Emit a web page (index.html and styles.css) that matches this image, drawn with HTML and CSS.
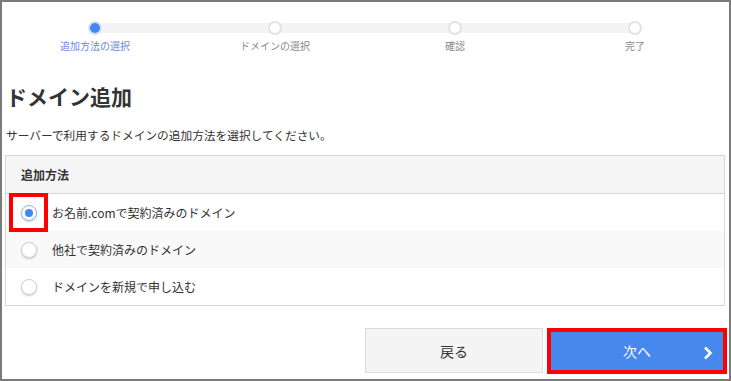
FILE: index.html
```html
<!DOCTYPE html>
<html lang="ja">
<head>
  <meta charset="UTF-8">
  <title>ドメイン追加</title>
  <link rel="stylesheet" href="styles.css">
</head>
<body>
  <div class="frame">
    <div class="steps">
      <div class="step active">
        <span class="dot"></span>
        <span class="step-label">追加方法の選択</span>
      </div>
      <div class="step">
        <span class="dot"></span>
        <span class="step-label">ドメインの選択</span>
      </div>
      <div class="step">
        <span class="dot"></span>
        <span class="step-label">確認</span>
      </div>
      <div class="step">
        <span class="dot"></span>
        <span class="step-label">完了</span>
      </div>
    </div>

    <h1 class="title">ドメイン追加</h1>
    <p class="lead">サーバーで利用するドメインの追加方法を選択してください。</p>

    <div class="methods">
      <div class="methods-head">追加方法</div>
      <label class="opt">
        <span class="radio-cell marked"><span class="radio checked"></span></span>
        <span class="opt-text">お名前.comで契約済みのドメイン</span>
      </label>
      <label class="opt alt">
        <span class="radio-cell"><span class="radio"></span></span>
        <span class="opt-text">他社で契約済みのドメイン</span>
      </label>
      <label class="opt">
        <span class="radio-cell"><span class="radio"></span></span>
        <span class="opt-text">ドメインを新規で申し込む</span>
      </label>
    </div>

    <div class="actions">
      <button class="btn back">戻る</button>
      <button class="btn next">次へ
        <svg class="chev" width="10" height="14" viewBox="0 0 10 14"><path d="M2 1.5 L7.5 7 L2 12.5" fill="none" stroke="#fff" stroke-width="2.6"/></svg>
      </button>
    </div>
  </div>
</body>
</html>
```

FILE: styles.css
```css
html, body {
  margin: 0;
  padding: 0;
  background: #fff;
  font-family: "Noto Sans CJK JP", "Noto Sans", sans-serif;
  color: #333;
}
.frame {
  width: 731px;
  height: 381px;
  box-sizing: border-box;
  border: 2px solid #7a7a7a;
  padding: 19px 4px 0 3px;
  overflow: hidden;
}
.steps {
  display: flex;
  position: relative;
}
.steps::before {
  content: "";
  position: absolute;
  top: 2px;
  left: 90px;
  right: 90px;
  height: 10px;
  background: #f4f4f4;
}
.step {
  flex: 1;
  display: flex;
  flex-direction: column;
  align-items: center;
  position: relative;
}
.dot {
  width: 14px;
  height: 14px;
  box-sizing: border-box;
  border-radius: 50%;
  border: 2px solid #e2e2e2;
  background: #fff;
}
.step.active .dot {
  border-color: #d3e2fc;
  background: #4586f2;
}
.step-label {
  margin-top: 5px;
  font-size: 10px;
  line-height: 12px;
  color: #8a8a8a;
}
.step.active .step-label {
  color: #6d86ea;
}
.title {
  margin: 30px 0 0;
  padding-left: 1px;
  font-size: 21px;
  line-height: 28px;
  font-weight: 700;
  color: #333;
}
.lead {
  margin: 17px 0 0;
  padding-left: 1px;
  font-size: 11.7px;
  line-height: 16px;
}
.methods {
  margin-top: 12px;
  border: 1px solid #d6d6d6;
}
.methods-head {
  height: 37px;
  display: flex;
  align-items: center;
  padding-left: 15px;
  background: #f5f5f5;
  border-bottom: 1px solid #d6d6d6;
  font-size: 12px;
  font-weight: 700;
}
.opt {
  height: 37px;
  display: flex;
  align-items: center;
  padding-left: 4px;
  font-size: 12px;
}
.opt.alt {
  background: #f9f9f9;
}
.radio-cell {
  width: 37px;
  height: 37px;
  display: flex;
  align-items: center;
  justify-content: center;
  box-sizing: border-box;
}
.radio-cell.marked {
  box-shadow: 0 0 0 1px #f00, inset 0 0 0 3px #f00;
}
.radio {
  width: 16px;
  height: 16px;
  box-sizing: border-box;
  border-radius: 50%;
  border: 1px solid #cfcfcf;
  background: #fff;
  box-shadow: 0 1px 2px rgba(0, 0, 0, 0.18);
  display: flex;
  align-items: center;
  justify-content: center;
}
.radio.checked {
  border-color: #8fb3f5;
}
.radio.checked::after {
  content: "";
  width: 8px;
  height: 8px;
  border-radius: 50%;
  background: #4586f2;
}
.opt-text {
  margin-left: 5px;
}
.actions {
  display: flex;
  justify-content: flex-end;
  gap: 4px;
  margin: 22px -2px 0 0;
  align-items: flex-start;
}
.btn {
  font-family: inherit;
  font-size: 14px;
  cursor: pointer;
  box-sizing: border-box;
}
.back {
  width: 178px;
  height: 45px;
  background: #f4f4f4;
  border: 1px solid #dcdcdc;
  color: #333;
}
.next {
  width: 180px;
  height: 46px;
  background: #4788ef;
  border: 4px solid #f00;
  color: #fff;
  position: relative;
}
.chev {
  position: absolute;
  right: 10px;
  top: 14px;
}
```
